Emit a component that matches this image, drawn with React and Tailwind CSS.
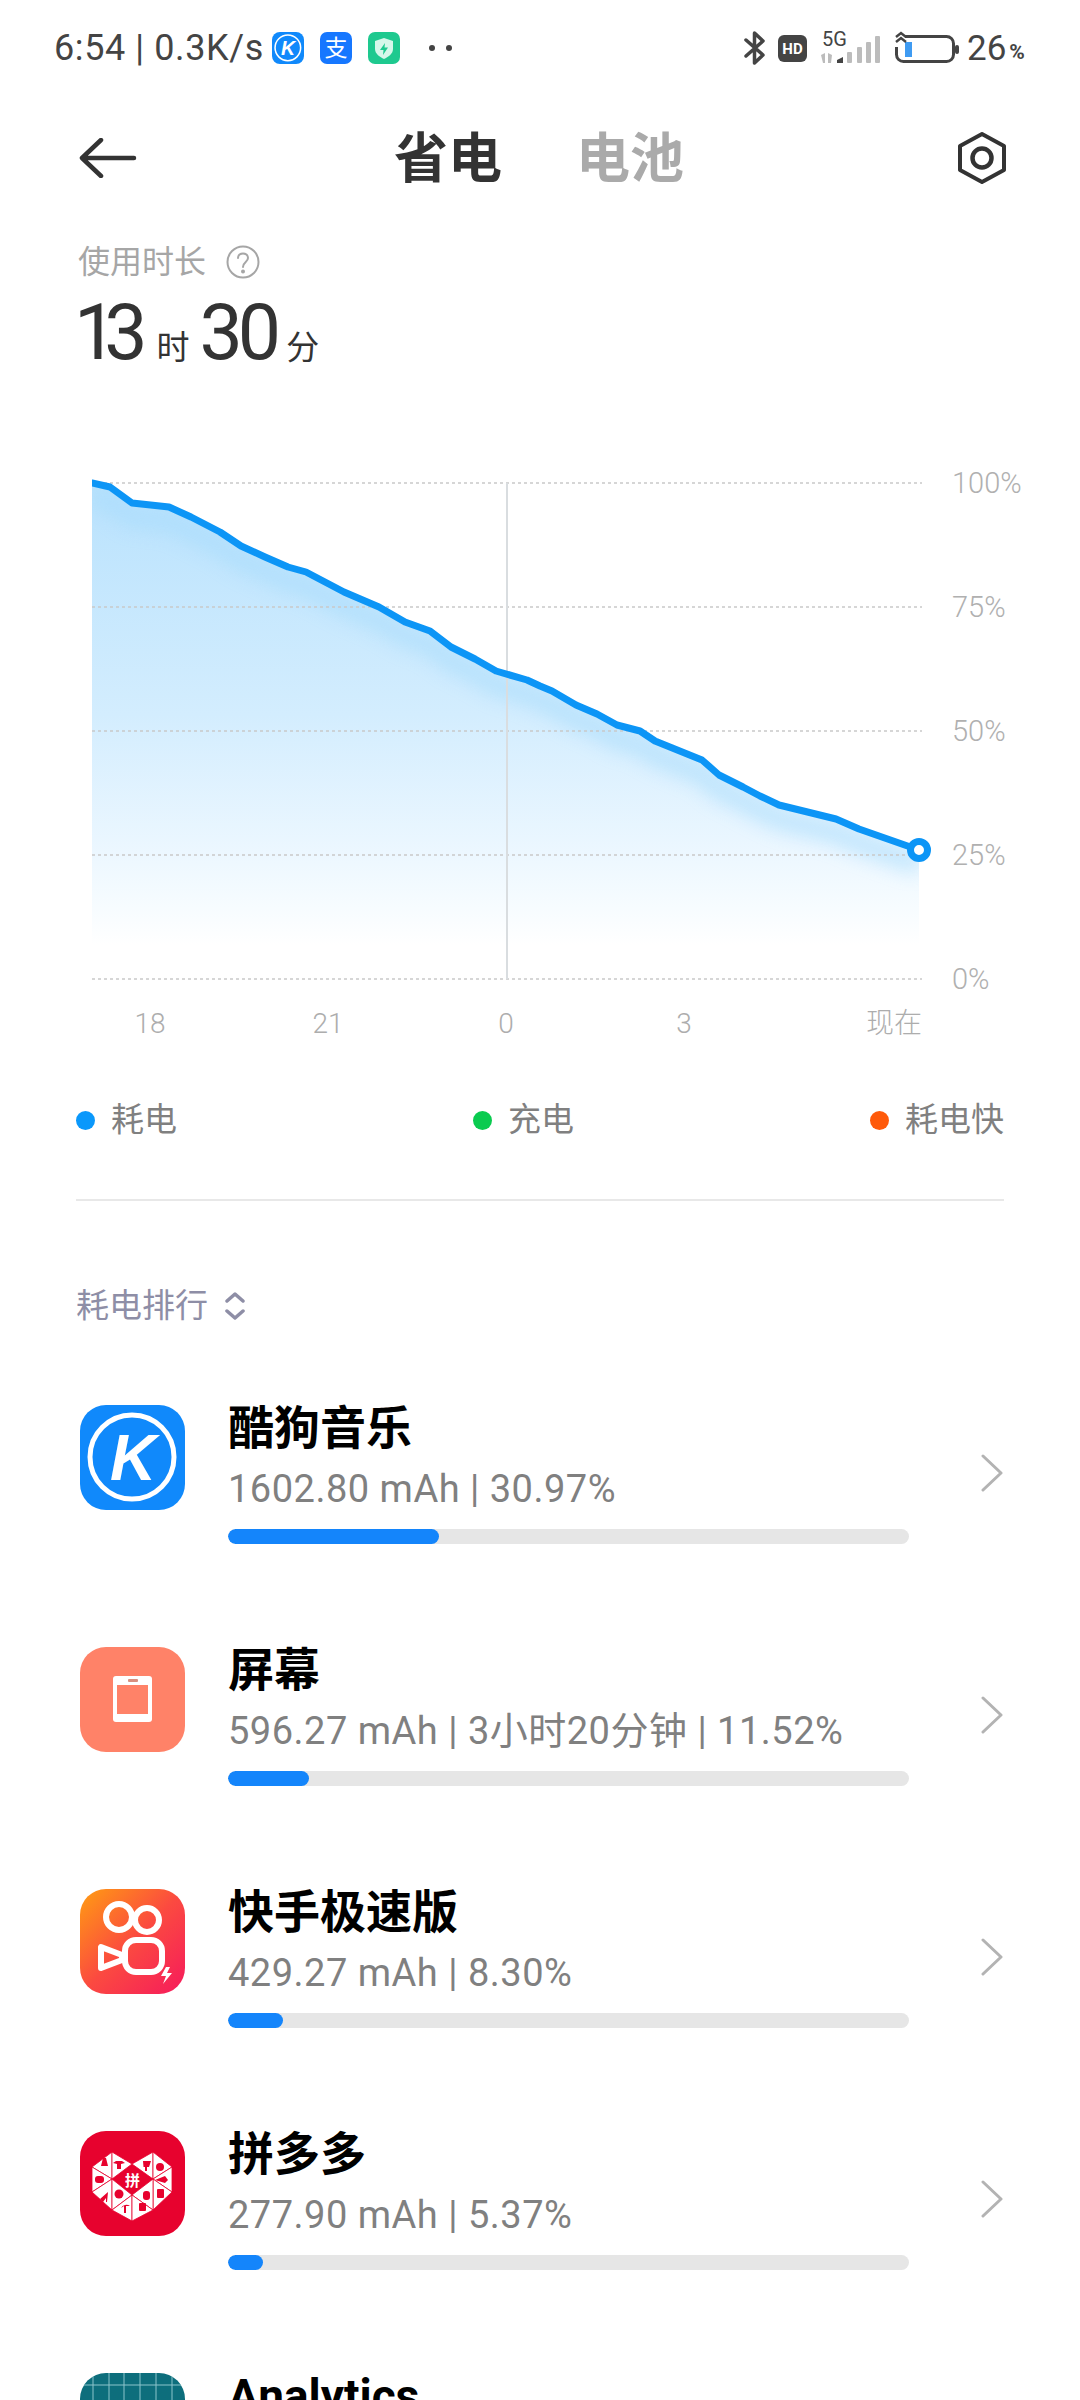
const LINE =
  "M92 483 L110 487 L132 503 L169 507 L191 517 L220 532 L241 546 L265 557 L288 567 L306 572 L344 592 L379 607 L405 622 L430 631 L451 647 L475 659 L496 671 L527 680 L540 686 L552 691 L576 705 L597 714 L617 725 L640 731 L655 741 L702 760 L719 775 L743 787 L760 796 L779 805 L836 819 L859 829 L919 850";
const AREA = LINE + " L919 979 L92 979 Z";

const sans = "font-['Roboto','Noto_Sans_CJK_SC',sans-serif]";

/* ---------- app logos ---------- */
const KugouLogo = ({ className }) => (
  <svg viewBox="0 0 105 105" className={className}>
    <rect width="105" height="105" rx="26" fill="#1089fb" />
    <circle cx="52" cy="52" r="42" fill="none" stroke="#fff" strokeWidth="5" />
    <text x="53" y="75" textAnchor="middle" fontSize="64" fontWeight="700" fontStyle="italic" fontFamily="Liberation Sans, sans-serif" fill="#fff">K</text>
  </svg>
);

const ScreenLogo = ({ className }) => (
  <svg viewBox="0 0 105 105" className={className}>
    <rect width="105" height="105" rx="26" fill="#ff8268" />
    <rect x="33" y="29" width="39" height="46" rx="3" fill="#fff" />
    <rect x="37" y="38" width="31" height="29" fill="#ff8268" />
    <rect x="48" y="32" width="10" height="3" rx="1" fill="#d98f7f" />
  </svg>
);

const KuaishouLogo = ({ className }) => (
  <svg viewBox="0 0 105 105" className={className}>
    <defs>
      <linearGradient id="ks" x1="0" y1="0" x2="1" y2="1">
        <stop offset="0" stopColor="#ff9d12" />
        <stop offset="0.5" stopColor="#fb4a40" />
        <stop offset="1" stopColor="#f61a5c" />
      </linearGradient>
    </defs>
    <rect width="105" height="105" rx="26" fill="url(#ks)" />
    <g fill="none" stroke="#fff" strokeWidth="6" strokeLinejoin="round">
      <circle cx="39" cy="28" r="13" />
      <circle cx="67" cy="31" r="12" />
      <rect x="45" y="51" width="37" height="32" rx="11" />
      <path d="M21 58 L21 79 L42 71 L42 66 Z" />
    </g>
    <path d="M86 78 L81 87 L86 87 L83 95 L92 84 L87 84 L90 78 Z" fill="#fff" />
  </svg>
);

const pddTriangles = [
  "12,36 32,21 32,48",
  "32,21 52,33 32,48",
  "12,36 32,48 12,61",
  "12,61 32,48 32,79",
  "32,48 52,64 32,79",
  "32,79 52,64 52,90",
  "52,33 73,21 73,48",
  "73,21 92,36 73,48",
  "92,36 92,61 73,48",
  "73,48 92,61 73,79",
  "52,64 73,48 73,79",
  "52,64 73,79 52,90",
];

const PddLogo = ({ className }) => (
  <svg viewBox="0 0 105 105" className={className}>
    <rect width="105" height="105" rx="26" fill="#e7022e" />
    <g fill="#fff" stroke="#e7022e" strokeWidth="0.8">
      {pddTriangles.map((p) => <polygon key={p} points={p} />)}
    </g>
    <g fill="#e7022e">
      <path d="M23 27 L26 27 L28 35 L21 35 Z" />
      <path d="M36 30 L42 30 L45 32 L41 33 L41 38 L37 38 L37 33 L33 32 Z" />
      <rect x="15" y="45" width="9" height="7" rx="3" />
      <path d="M20 68 L28 61 L27 71 L26 71 L26 67 L23 71 Z" />
      <circle cx="39" cy="63" r="4.500" />
      <path d="M41 77 A6 6 0 0 1 50 75 L46 75 L46 82 L44 82 L44 75 Z" />
      <path d="M63 30 L71 30 L69 36 L67 36 L67 40 L65 40 L65 36 L63.500 36 Z" />
      <circle cx="80" cy="36" r="4" />
      <path d="M75 49 L85 45 L88 49 L85 52 Z" />
      <rect x="77" y="58" width="7" height="9" rx="1" />
      <rect x="63" y="60" width="7" height="9" rx="3" />
      <rect x="59" y="72" width="7" height="8" rx="1" />
    </g>
    <text x="52.500" y="55" textAnchor="middle" fontSize="15" fontWeight="700" fontFamily="Noto Sans CJK SC, sans-serif" fill="#fff">拼</text>
  </svg>
);

const AnalyticsLogo = ({ className }) => (
  <svg viewBox="0 0 105 105" className={className}>
    <defs>
      <clipPath id="an">
        <rect width="105" height="105" rx="26" />
      </clipPath>
    </defs>
    <g clipPath="url(#an)">
      <rect width="105" height="105" fill="#0d6e7c" />
      <g stroke="#8cc4cb" strokeWidth="1">
        {[13, 29, 44, 60, 76, 92].map((x) => <line key={x} x1={x} y1="0" x2={x} y2="105" />)}
        {[12, 28, 44, 60, 76, 92].map((y) => <line key={y} x1="0" y1={y} x2="105" y2={y} />)}
      </g>
    </g>
  </svg>
);

/* ---------- status bar ---------- */
const StatusBar = () => (
  <div className={`h-[96px] flex items-center pl-[54px] text-[#444] ${sans}`}>
    <span className="text-[36px] leading-none tracking-[0.6px] w-[218px] whitespace-nowrap">6:54 | 0.3K/s</span>
    <KugouLogo className="w-8 h-8" />
    <svg viewBox="0 0 32 32" className="w-8 h-8 ml-4 overflow-visible">
      <rect width="32" height="32" rx="7" fill="#1677ff" />
      <text x="16" y="24" textAnchor="middle" fontSize="23" fontFamily="Noto Sans CJK SC, sans-serif" fill="#fff">支</text>
    </svg>
    <svg viewBox="0 0 32 32" className="w-8 h-8 ml-4">
      <rect width="32" height="32" rx="7" fill="#1ec98f" />
      <path d="M16 6 L25 9 V17 C25 22 20 25 16 27 C12 25 7 22 7 17 V9 Z" fill="#d6f7ea" />
      <path d="M17 11 L12 18 H15.500 L15 23 L20 15.500 H16.500 Z" fill="#1ec98f" />
    </svg>
    <span className="w-[6px] h-[6px] rounded-full bg-[#444] ml-[29px]" />
    <span className="w-[6px] h-[6px] rounded-full bg-[#444] ml-[11px]" />

    <svg viewBox="0 0 24 36" className="w-[24px] h-[36px] ml-[291px]" fill="none" stroke="#444" strokeWidth="3.500" strokeLinejoin="round" strokeLinecap="round">
      <path d="M3 10 L20 25 L11.500 33 V3 L20 11 L3 26" />
    </svg>
    <svg viewBox="0 0 29 27" className="w-[29px] h-[27px] ml-[11px]">
      <rect width="29" height="27" rx="6" fill="#444" />
      <text x="14.500" y="19" textAnchor="middle" fontSize="15" fontWeight="700" fontFamily="Roboto, sans-serif" fill="#fff">HD</text>
    </svg>
    <svg viewBox="0 0 62 36" className="w-[62px] h-[36px] ml-[13px] overflow-visible">
      <text x="2" y="16" fontSize="20" fontFamily="Roboto, sans-serif" fill="#444">5G</text>
      <g fill="#bcbcbc">
        <path d="M1 25 L5 23 V33 H3 Z M8 23 L12 25 L11 33 H8 Z" />
        <rect x="27" y="22" width="5" height="11" rx="1" />
        <rect x="37" y="17" width="5" height="16" rx="1" />
        <rect x="46" y="12" width="5" height="21" rx="1" />
        <rect x="55" y="6" width="5" height="27" rx="1" />
      </g>
      <path d="M17 30 L23 27 V33 H17 Z" fill="#444" />
    </svg>
    <svg viewBox="0 0 66 36" className="w-[66px] h-[36px] ml-[13px]" fill="none">
      <rect x="1.500" y="6.500" width="57" height="25" rx="7" stroke="#444" strokeWidth="3" />
      <rect x="60" y="15" width="4" height="9" rx="2" fill="#444" />
      <path d="M0 0 H10 V17 H0 Z" fill="#fff" />
      <rect x="10" y="12" width="7" height="15" fill="#3f9bf2" />
      <path d="M1 7 L6 3 L11 7 M1 12 L6 8 L11 12" stroke="#444" strokeWidth="2.500" />
    </svg>
    <span className="text-[35px] leading-none ml-[6px]">26</span>
    <span className="text-[21px] leading-none font-bold mt-[9px] ml-[3px]">%</span>
  </div>
);

/* ---------- chart ---------- */
const BatteryChart = () => (
  <div className="flex items-start pl-[92px]">
    <svg viewBox="92 469 848 520" className="w-[848px] h-[520px] shrink-0">
      <defs>
        <linearGradient id="fill" gradientUnits="userSpaceOnUse" x1="0" y1="483" x2="0" y2="945">
          <stop offset="0" stopColor="#b9e2fd" />
          <stop offset="0.5" stopColor="#d3edfe" />
          <stop offset="0.8" stopColor="#ecf7ff" />
          <stop offset="0.92" stopColor="#f7fcff" />
          <stop offset="1" stopColor="#ffffff" />
        </linearGradient>
        <clipPath id="areaClip">
          <path d={AREA} />
        </clipPath>
        <filter id="soft" x="-5%" y="-10%" width="110%" height="120%">
          <feGaussianBlur stdDeviation="9" />
        </filter>
      </defs>
      <path d={AREA} fill="url(#fill)" />
      <g clipPath="url(#areaClip)">
        <path d={LINE} transform="translate(0 14)" fill="none" stroke="#a6dbfc" strokeWidth="22" opacity="0.55" filter="url(#soft)" />
      </g>
      <g stroke="#c9c9c9" strokeWidth="1.500" strokeDasharray="3 3">
        {[483, 607, 731, 855, 979].map((y) => <line key={y} x1="92" y1={y} x2="922" y2={y} />)}
      </g>
      <line x1="507" y1="483" x2="507" y2="979" stroke="#d9dde0" strokeWidth="2" />
      <path d={LINE} fill="none" stroke="#0c95f6" strokeWidth="7" strokeLinejoin="round" strokeLinecap="round" />
      <circle cx="919" cy="850" r="8.500" fill="#fff" stroke="#0c95f6" strokeWidth="7" />
    </svg>
    <div className={`flex flex-col gap-[96px] ml-[12px] text-[29px] leading-7 text-[#b0b0b0] font-light ${sans}`}>
      <span>100%</span>
      <span>75%</span>
      <span>50%</span>
      <span>25%</span>
      <span>0%</span>
    </div>
  </div>
);

const TimeAxis = () => (
  <div className={`mt-[15px] h-8 w-[922px] pl-[61px] flex items-center text-[28px] leading-8 text-[#adadad] font-light ${sans}`}>
    {["18", "21", "0", "3"].map((t) => (
      <span key={t} className="w-[178px] text-center">{t}</span>
    ))}
    <span className="flex-1 text-right">现在</span>
  </div>
);

const LegendItem = ({ dot, label }) => (
  <div className="flex items-center gap-4">
    <span className={`w-[19px] h-[19px] rounded-full ${dot}`} />
    <span className="text-[33px] leading-10 text-[#808080]">{label}</span>
  </div>
);

/* ---------- rows ---------- */
const apps = [
  { name: "酷狗音乐", info: "1602.80 mAh | 30.97%", Logo: KugouLogo, bar: "w-[211px]" },
  { name: "屏幕", info: "596.27 mAh | 3小时20分钟 | 11.52%", Logo: ScreenLogo, bar: "w-[81px]" },
  { name: "快手极速版", info: "429.27 mAh | 8.30%", Logo: KuaishouLogo, bar: "w-[55px]" },
  { name: "拼多多", info: "277.90 mAh | 5.37%", Logo: PddLogo, bar: "w-[35px]" },
  { name: "Analytics", info: "", Logo: AnalyticsLogo, bar: "w-[20px]" },
];

const AppRow = ({ name, info, Logo, bar }) => (
  <div className="h-[242px] flex items-start pl-[80px]">
    <Logo className="w-[105px] h-[105px] shrink-0" />
    <div className="ml-[43px] w-[681px] -mt-[1px]">
      <div className="h-[48px] text-[46px] leading-[48px] font-bold text-black whitespace-nowrap">{name}</div>
      <div className="h-[48px] mt-[13px] text-[38px] leading-[48px] tracking-[0.5px] text-[#808080] whitespace-nowrap">{info}</div>
      <div className="h-[15px] mt-[16px] rounded-full bg-[#e6e6e6] overflow-hidden">
        <div className={`h-full rounded-full bg-[#1485fb] ${bar}`} />
      </div>
    </div>
    <svg viewBox="0 0 24 38" className="w-6 h-[38px] ml-[71px] mt-[49px]" fill="none" stroke="#b3b3b3" strokeWidth="3" strokeLinecap="round" strokeLinejoin="round">
      <path d="M3 2 L21 19 L3 36" />
    </svg>
  </div>
);

export default function App() {
  return (
    <div className={`w-[1080px] h-[2400px] overflow-hidden bg-white ${sans}`}>
      <StatusBar />

      {/* header */}
      <div className="h-[124px] flex items-center pl-[79px]">
        <svg viewBox="0 0 58 40" className="w-[58px] h-[40px] shrink-0" fill="none" stroke="#333" strokeWidth="4.500" strokeLinecap="round" strokeLinejoin="round">
          <path d="M22 2 L3 20 L22 38 M3 20 H55" />
        </svg>
        <div className="flex gap-[74px] ml-[257px] mt-[3px] text-[54px] leading-[60px] font-bold">
          <span className="text-[#333]">省电</span>
          <span className="text-[#aaaaaa]">电池</span>
        </div>
        <svg viewBox="0 0 50 52" className="w-[50px] h-[52px] ml-[273px]" fill="none" stroke="#333" strokeWidth="4">
          <path d="M25 2 L47 14 V38 L25 50 L3 38 V14 Z" strokeLinejoin="round" />
          <circle cx="25" cy="26" r="9.500" strokeWidth="4.500" />
        </svg>
      </div>

      {/* usage time */}
      <div className="mt-[24px] h-[36px] pl-[78px] flex items-center">
        <span className="text-[32px] leading-9 text-[#a6a6a6]">使用时长</span>
        <svg viewBox="0 0 34 34" className="w-[34px] h-[34px] ml-[20px]" fill="none" stroke="#a6a6a6" strokeWidth="2">
          <circle cx="17" cy="17" r="15.500" />
          <path d="M12 13 C12 7 22 7 22 13 C22 17 17 17 17 22" strokeLinecap="round" />
          <circle cx="17" cy="26.500" r="1" fill="#a6a6a6" />
        </svg>
      </div>
      <div className="mt-[13px] h-[80px] pl-[74px] flex items-baseline text-[#333]">
        <span className="text-[77px] leading-[80px] tracking-[-13px]">13</span>
        <span className="text-[33px] ml-[22px]">时</span>
        <span className="text-[77px] leading-[80px] tracking-[-5px] ml-[10px]">30</span>
        <span className="text-[33px] ml-[10px]">分</span>
      </div>

      <div className="mt-[96px]">
        <BatteryChart />
      </div>
      <TimeAxis />

      <div className="mt-[60px] mx-[76px] flex justify-between">
        <LegendItem dot="bg-[#0a98fb]" label="耗电" />
        <LegendItem dot="bg-[#0acb4f]" label="充电" />
        <LegendItem dot="bg-[#ff5a0a]" label="耗电快" />
      </div>

      <div className="mt-[59px] mx-[76px] h-[2px] bg-[#e8e8e8]" />

      <div className="mt-[85px] h-10 pl-[76px] flex items-center">
        <span className="text-[33px] leading-10 text-[#8e8ea6]">耗电排行</span>
        <svg viewBox="0 0 20 28" className="w-5 h-7 ml-[17px]" fill="none" stroke="#8e8ea6" strokeWidth="3.500" strokeLinecap="round" strokeLinejoin="round">
          <path d="M2 9 L10 2 L18 9 M2 19 L10 26 L18 19" />
        </svg>
      </div>

      <div className="mt-[79px]">
        {apps.map((a) => <AppRow key={a.name} {...a} />)}
      </div>
    </div>
  );
}
